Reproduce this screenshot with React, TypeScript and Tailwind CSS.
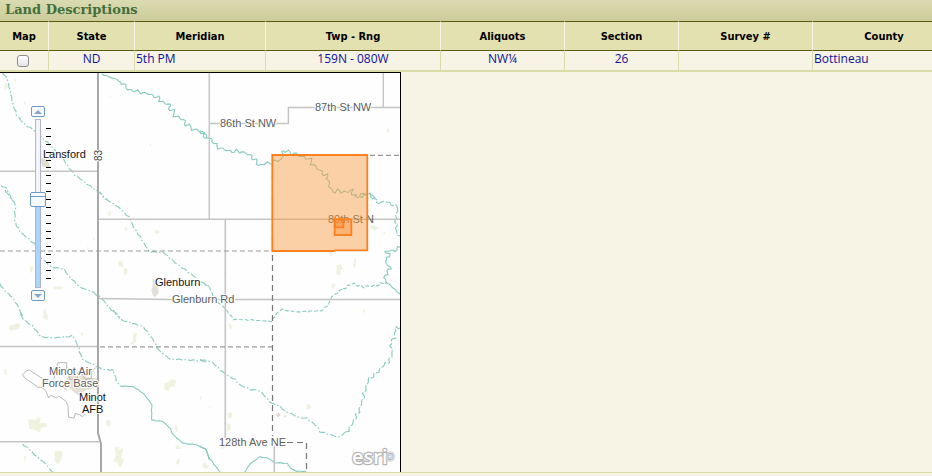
import type { ReactNode } from "react";

const columns = [
  { name: "Map", width: "w-[49px]", value: "" },
  { name: "State", width: "w-[86px]", value: "ND" },
  { name: "Meridian", width: "w-[131px]", value: "5th PM", left: true },
  { name: "Twp - Rng", width: "w-[175px]", value: "159N - 080W" },
  { name: "Aliquots", width: "w-[124px]", value: "NW¼" },
  { name: "Section", width: "w-[114px]", value: "26" },
  { name: "Survey #", width: "w-[134px]", value: "" },
  { name: "County", width: "w-[143px]", value: "Bottineau", left: true },
];

/* Map geometry is kept in tiles, three units to the pixel. */
function Tile({ x, y, children }: { x: number; y: number; children: ReactNode }) {
  return <g transform={`translate(${x} ${y}) scale(0.33333)`}>{children}</g>;
}

/* Draws a watercourse through the given points, winding to either side of it. */
function Stream({ points, wind = 2, dash }: { points: string; wind?: number; dash?: string }) {
  const pts = points.split(" ").map((p) => p.split(",").map(Number));
  const out: string[] = [];
  let k = 0;
  pts.forEach(([x, y], i) => {
    if (i === pts.length - 1) {
      out.push(`${x},${y}`);
      return;
    }
    const [nx, ny] = pts[i + 1];
    const dx = nx - x;
    const dy = ny - y;
    const length = Math.hypot(dx, dy) || 1;
    const steps = Math.max(1, Math.round(length / 6));
    for (let s = 0; s < steps; s++, k++) {
      const side = wind * Math.sin(k * 1.7) * (0.6 + 0.4 * Math.cos(k * 0.6));
      const t = s / steps;
      out.push(`${(x + dx * t - (dy / length) * side).toFixed(1)},${(y + dy * t + (dx / length) * side).toFixed(1)}`);
    }
  });
  return <polyline points={out.join(" ")} strokeDasharray={dash} />;
}

const broken = "20 6 5 6";

function Streams() {
  return (
    <g fill="none" stroke="#86cbc0" strokeWidth="3.3" strokeLinejoin="round">
      <Tile x={0} y={70}>
        <Stream wind={2} points="306,12 330,22 350,28 362,36" />
        <Stream wind={6} points="362,36 375,45 382,58 400,62 440,70 480,85" />
        <Stream wind={10} points="480,85 490,100 508,102 512,120 530,140 550,150 565,170 590,180 605,186 622,204" />
        <Stream points="8,8 22,26 30,60 38,100 50,135 70,160 105,183 150,225 185,260 208,295 225,315 265,345 300,368 318,390" dash={broken} />
        <Stream points="4,346 18,354 28,372 36,388" dash={broken} />
      </Tile>
      <Tile x={200} y={70}>
        <Stream wind={7} points="0,182 12,190 20,202 35,208 50,230 85,243 125,245 150,255 165,270 176,286 215,277 245,268 252,240 270,246" />
        <Stream wind={9} points="270,246 300,258 325,265 345,290 370,310 385,325 388,350 395,362 440,366 455,360 467,383 490,370 526,382" />
      </Tile>
      <Tile x={0} y={190}>
        <Stream points="16,0 30,22 46,42 44,95 60,125 105,163 125,205 155,232 190,236 210,262 240,292 270,302 300,320 330,355 360,385" dash={broken} />
        <Stream points="290,0 320,28 360,55 390,85 400,110 420,140 447,185 490,187 525,218 570,250 610,280 630,290" dash={broken} />
        <Stream points="0,280 10,298 35,320 55,350 68,385" dash={broken} />
      </Tile>
      <Tile x={200} y={190}>
        <Stream points="14,280 30,295 42,325 75,355 100,388 130,389 215,394 230,370 245,358 290,366 365,362 385,345 395,320 430,295" dash="12 6" />
        <Stream wind={5} points="430,295 460,280 480,290 520,288 558,278" dash="12 5" />
        <Stream wind={5} points="480,20 500,12 525,20 530,38 560,35 585,48 595,52 587,80 590,132 601,138" dash="30 5" />
        <Stream wind={7} points="601,172 585,182 558,182 568,200 555,215 572,235 555,255 558,275" />
        <Stream wind={2} points="558,275 575,290 600,312" />
      </Tile>
      <Tile x={0} y={310}>
        <Stream points="60,0 70,28 100,50 122,80 160,84 220,78 235,110 245,145 260,155 290,168 305,178 340,180 350,215 360,228" dash={broken} />
        <Stream points="340,0 365,30 430,50 460,90 475,120 510,147 600,152 625,157" dash={broken} />
        <Stream wind={1} points="360,228 400,230 430,250 455,282 455,330 490,335 510,355 520,375 550,400 590,404 620,420 628,450" />
        <Stream points="68,402 90,420 110,440 135,460 158,486" dash={broken} />
      </Tile>
      <Tile x={200} y={310}>
        <Stream points="0,148 35,155 75,192 105,208 120,225 150,238 180,243 215,280 240,288 250,300 295,322 320,325 350,348 360,365 385,372 415,382 440,365" dash={broken} />
        <Stream wind={6} points="440,365 455,345 468,320 480,295 488,270 495,240 508,205 530,190 545,172 570,150 577,130 572,95 584,85 585,56 600,54" dash="22 5" />
        <Stream wind={1} points="0,408 18,418 25,440 60,486" />
        <Stream wind={1} points="134,486 150,462 180,440 205,445 225,458 262,460 272,475 290,484 318,484" />
      </Tile>
    </g>
  );
}

function Vegetation() {
  return (
    <g fill="#eef2de">
      <Tile x={0} y={70}>
        <path d="M14 42l8-4 2 14-10 8zM42 28l8 0-2 8-6-2zM72 94l6 0-2 10-4-2zM328 78l6 2-4 4zM448 222l6 0-2 8z" />
        <path d="M104 256l10 0 4 8-12-2zM122 262l14 4 12 14 2 12-24-2z" fill="#e1dfcf" />
      </Tile>
      <Tile x={200} y={70}>
        <path d="M562 174l6 4 0 12-8-6z" />
      </Tile>
      <Tile x={0} y={190}>
        <path d="M328 62l6 2-4 14-6-2zM374 112l8 0-2 10-6-2zM464 120l12 2 2 6-12 4zM356 212l12 4 2 16-14-4zM372 234l10 2 0 16-10 4zM92 228l8 2-4 18-6-2zM160 290l30 0-4 8-24 0zM130 360l8-4 0 14 6 6-2 14-12-4zM278 144l6 0-2 8zM262 170l4 2-6 12z" />
        <path d="M458 266l8 4 0 16 8 6 2 16-12 14-6-8-4-14 4-10z" fill="#e2dfd8" />
      </Tile>
      <Tile x={200} y={190}>
        <path d="M510 112l8-8 18 10-12 8zM386 186l10 0 0 12-6-2zM410 226l12-4 6 14-6 4 0 16-14-4 2-12zM462 208l6-4-2 28-6-2zM396 280l8 2-2 12-6-2zM490 360l6 2-4 10zM392 140l8-2-2 6zM548 128l8-2-2 8zM94 260l4 4-4 4z" />
      </Tile>
      <Tile x={0} y={310}>
        <path d="M30 46l12 0 4-6 16 2-6 14-24 6-6-6zM244 66l6 4-2 8-6-2zM400 72l10-4-2 26-12 12-6-4 8-8zM12 176l6 2 2 16-6 0zM494 220l14-4 4-8 16 2-4 20-12 0-8 14-12-8zM84 328l24 2 4-8 10 4-4 14 20 0 4 8-18 6-6 14-12-8-18-4zM318 330l14 2-2 18-12-4zM524 344l6 0 4 22-8-2zM164 424l24-2-2 22-10 18-12-6zM344 412l14 0-2 8 14-6-6 30 8 6-8 20-8 0-2-12-14-4 8-16zM526 408l12-2 4 12-14-2zM532 448l8 0-4 16-8-2zM72 436l6 2-4 22zM600 260l6-2-4 14z" />
      </Tile>
      <Tile x={200} y={310}>
        <path d="M86 42l6-4 4 16-8 4zM486 0l10-2-4 8zM28 288l4 2-4 10zM82 310l14-4 0 16-10 4zM80 342l10-2 2 18-10 8zM322 282l6 0 6 12-16 6zM216 258l6 4-4 10zM14 456l6 10 10 0-12 12-12-10zM64 408l6-4 2 12-8 0zM262 464l4 8-6-2zM458 416l4 0 0 14-4-2z" />
        <path d="M228 314l8-6 6 8-8 6zM250 318l8-2-2 6z" fill="#e0d4d0" />
      </Tile>
    </g>
  );
}

function Roads() {
  return (
    <g fill="none">
      <g stroke="#c4c4c4" strokeWidth="1.4">
        <path d="M0 171.3H98M209.3 73V219.3M98 219.3H400M209 123.5H288.4V107.5H400M383.3 73V107.5M98 298.5L170 299.5H400M0 346.5H98M0 441.7H99" />
        <path d="M225.3 219V438M274.3 446V472" strokeWidth="1.6" />
      </g>
      <path d="M98 73V433L101 444V472" stroke="#a8a8a8" strokeWidth="2" />
      <g stroke="#999" strokeWidth="1.2">
        <path d="M0 251H272M370 155.4H400M100 346.8H272" strokeDasharray="5 3" />
        <path d="M272.5 155V436M287 442.5H306.5V472" stroke="#777" strokeDasharray="6 4" />
      </g>
    </g>
  );
}

function AirBase() {
  return (
    <Tile x={0} y={310}>
      <path d="M150 190l8-16 10-2 16 4-16 16zM230 184l44 0 0 12-30 0-14-4z" fill="#c4e5f5" />
      <path d="M200 206l8-12 30 6 10-2 46 8 0 26-34 8-26 16-34-28z" fill="#e6e1d5" />
      <g fill="none" stroke="#b8b8b8" strokeWidth="3">
        <path d="M68 194L80 182L88 180L146 218L166 212L200 240M68 194L74 204L98 220L114 232L126 232L138 244L146 264L152 256L170 264L176 258L198 274L204 288L206 322L222 324L226 310L238 314L248 320L256 312" />
        <path d="M162 206l12-48 26 0 0 34M206 196l4 12 22 0 0-14M246 192l10 16 18-2 0-20 14-14" />
      </g>
    </Tile>
  );
}

function Labels() {
  return (
    <g
      fontFamily='"Liberation Sans", Arial, sans-serif'
      fontSize="11"
      stroke="#fff"
      strokeWidth="2"
      strokeLinejoin="round"
      className="[&_text]:[paint-order:stroke]"
    >
      <g fill="#5c5c5c">
        <text x="220" y="127">86th St NW</text>
        <text x="315" y="111">87th St NW</text>
        <text x="328" y="223" strokeWidth="0">80th St N</text>
        <text x="172" y="303">Glenburn Rd</text>
        <text x="219" y="446">128th Ave NE</text>
        <text x="49" y="375">Minot Air</text>
        <text x="42" y="387">Force Base</text>
      </g>
      <g fill="#111">
        <text x="43" y="158">Lansford</text>
        <text x="155" y="286">Glenburn</text>
        <text x="79" y="401">Minot</text>
        <text x="82" y="413">AFB</text>
        <text transform="translate(102 161) rotate(-90)" fill="#444" fontSize="10">83</text>
      </g>
    </g>
  );
}

function Parcels() {
  return (
    <g stroke="#fb8020" strokeWidth="1.8">
      <path d="M272.3 155H367.3V250.3H335L333 251H272.3Z" fill="#fa9a3c" fillOpacity="0.45" />
      <path d="M334.7 219.3H351.3V235H334.7Z" fill="#fb8a2c" fillOpacity="0.4" />
      <path d="M334.7 219.3H343.3V227.3H334.7Z" fill="#fb8a2c" fillOpacity="0.4" />
    </g>
  );
}

function Arrow({ down = false }: { down?: boolean }) {
  return (
    <svg viewBox="0 0 8 4" className="h-1 w-2" aria-hidden="true">
      <path d={down ? "M0 0H8L4 4Z" : "M0 4H8L4 0Z"} fill="#8aa2d0" />
    </svg>
  );
}

const zoomButton =
  "flex h-[11px] w-[14px] items-center justify-center rounded-xs border border-[#6b9bc9] bg-[#f6f9fd]";

function ZoomControl() {
  return (
    <div className="absolute top-[33px] left-[30px] flex">
      <div className="flex w-4 flex-col items-center gap-[2px]">
        <button type="button" aria-label="Zoom in" className={zoomButton}>
          <Arrow />
        </button>
        <input
          type="range"
          min={0}
          max={19}
          defaultValue={10}
          aria-label="Zoom level"
          className="h-[169px] w-4 appearance-none [direction:rtl] [writing-mode:vertical-lr] [&::-webkit-slider-runnable-track]:mx-auto [&::-webkit-slider-runnable-track]:h-full [&::-webkit-slider-runnable-track]:w-[6px] [&::-webkit-slider-runnable-track]:border [&::-webkit-slider-runnable-track]:border-[#b0b4cc] [&::-webkit-slider-runnable-track]:bg-[linear-gradient(#f4f4fa_50%,#a9d4fc_50%)] [&::-webkit-slider-thumb]:ml-[-6px] [&::-webkit-slider-thumb]:h-[15px] [&::-webkit-slider-thumb]:w-4 [&::-webkit-slider-thumb]:appearance-none [&::-webkit-slider-thumb]:rounded-xs [&::-webkit-slider-thumb]:border [&::-webkit-slider-thumb]:border-[#6b9bc9] [&::-webkit-slider-thumb]:bg-[linear-gradient(#f6f9fd_3px,#6b9bc9_3px,#6b9bc9_4px,#f6f9fd_4px)]"
        />
        <button type="button" aria-label="Zoom out" className={zoomButton}>
          <Arrow down />
        </button>
      </div>
      <div className="mt-[22px] flex h-[151px] w-[5px] flex-col justify-between" aria-hidden="true">
        {Array.from({ length: 20 }, (_, i) => (
          <span key={i} className="h-px bg-black" />
        ))}
      </div>
    </div>
  );
}

export default function App() {
  return (
    <main className="min-h-screen overflow-hidden bg-[#f7f4e5] font-['Open_Sans',sans-serif] text-xs">
      <h1 className="h-[21px] bg-linear-to-b from-[#dadbb2] to-[#cccb99] pl-[5px] font-['DejaVu_Serif',serif] text-[13px] leading-[19px] font-bold text-[#426f3c]">
        Land Descriptions
      </h1>
      <table className="w-full min-w-[956px] table-fixed border-separate border-spacing-0">
        <thead>
          <tr className="h-[30px] bg-[#e4e1b1] text-black">
            {columns.map((c) => (
              <th
                key={c.name}
                scope="col"
                className={`${c.width} border-y border-r border-y-[#5c5c10] border-r-[#f7f4e5] p-0 pt-0.5 text-[11px] leading-4 font-bold font-['DejaVu_Sans_Condensed','DejaVu_Sans',sans-serif]`}
              >
                {c.name}
              </th>
            ))}
          </tr>
        </thead>
        <tbody>
          <tr className="h-[21px] text-[#10109c]">
            {columns.map((c) => (
              <td
                key={c.name}
                className={`border-r border-b-2 border-[#dadcaa] p-0 align-top leading-4 ${c.left ? "pl-px text-left" : "text-center"}`}
              >
                {c.name === "Map" ? (
                  <input
                    type="checkbox"
                    aria-label="Show on map"
                    className="mt-1 ml-[17px] block size-3 appearance-none rounded-[3px] border border-[#8c8c8c] bg-linear-to-b from-white to-[#e4e4e4]"
                  />
                ) : (
                  c.value
                )}
              </td>
            ))}
          </tr>
        </tbody>
      </table>
      <section aria-label="Map" className="border-b border-[#dadcaa]">
        <div className="relative w-[401px] border-t border-r border-black bg-[#fefefe]">
          <svg viewBox="0 73 400 399" className="block w-full" role="img" aria-label="Area around Glenburn">
            <Vegetation />
            <Streams />
            <AirBase />
            <Roads />
            <Labels />
            <Parcels />
            <g fontFamily='"Open Sans", sans-serif' fill="#fff" stroke="#b4b4b4" strokeWidth="2.4" strokeLinejoin="round" paintOrder="stroke">
              <text x="352" y="464" fontSize="20" fontWeight="600">esri</text>
              <text x="386" y="461" fontSize="10" strokeWidth="1.4">®</text>
            </g>
          </svg>
          <ZoomControl />
        </div>
      </section>
    </main>
  );
}
